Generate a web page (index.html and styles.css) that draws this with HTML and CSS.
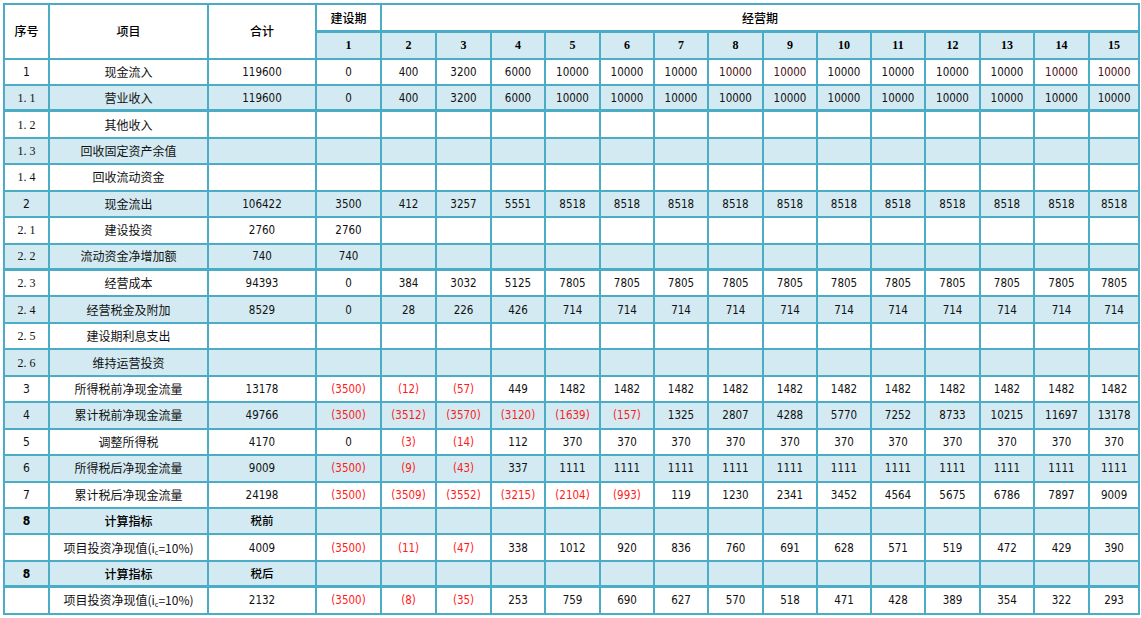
FILE: index.html
```html
<!DOCTYPE html>
<html lang="zh-CN">
<head>
<meta charset="utf-8">
<title>项目投资现金流量表</title>
<link rel="stylesheet" href="styles.css">
</head>
<body>
<table class="cf">
<colgroup>
<col class="c-seq"><col class="c-item"><col class="c-total"><col class="c-y1">
<col class="c-a"><col class="c-a"><col class="c-b"><col class="c-a"><col class="c-b"><col class="c-b"><col class="c-a"><col class="c-b"><col class="c-b"><col class="c-b"><col class="c-a"><col class="c-b"><col class="c-a"><col class="c-last">
</colgroup>
<thead>
<tr class="h1">
<th rowspan="2" class="hb">序号</th><th rowspan="2">项目</th><th rowspan="2">合计</th><th class="thk">建设期</th><th colspan="14" class="thk">经营期</th>
</tr>
<tr class="h2 alt">
<th>1</th><th>2</th><th>3</th><th>4</th><th>5</th><th>6</th><th>7</th><th>8</th><th>9</th><th>10</th><th>11</th><th>12</th><th>13</th><th>14</th><th>15</th>
</tr>
</thead>
<tbody>
<tr><td class="sq">1</td><td>现金流入</td><td>119600</td><td>0</td><td>400</td><td>3200</td><td>6000</td><td>10000</td><td>10000</td><td>10000</td><td class="mr">10000</td><td class="mr">10000</td><td>10000</td><td>10000</td><td>10000</td><td>10000</td><td class="mr">10000</td><td class="mr">10000</td></tr>
<tr class="alt thkb"><td class="sqs">1. 1</td><td>营业收入</td><td>119600</td><td>0</td><td>400</td><td>3200</td><td>6000</td><td>10000</td><td>10000</td><td>10000</td><td>10000</td><td>10000</td><td>10000</td><td>10000</td><td>10000</td><td>10000</td><td>10000</td><td>10000</td></tr>
<tr><td class="sqs">1. 2</td><td>其他收入</td><td></td><td></td><td></td><td></td><td></td><td></td><td></td><td></td><td></td><td></td><td></td><td></td><td></td><td></td><td></td><td></td></tr>
<tr class="alt"><td class="sqs">1. 3</td><td>回收固定资产余值</td><td></td><td></td><td></td><td></td><td></td><td></td><td></td><td></td><td></td><td></td><td></td><td></td><td></td><td></td><td></td><td></td></tr>
<tr><td class="sqs">1. 4</td><td>回收流动资金</td><td></td><td></td><td></td><td></td><td></td><td></td><td></td><td></td><td></td><td></td><td></td><td></td><td></td><td></td><td></td><td></td></tr>
<tr class="alt"><td class="sq">2</td><td>现金流出</td><td>106422</td><td>3500</td><td>412</td><td>3257</td><td>5551</td><td>8518</td><td>8518</td><td>8518</td><td>8518</td><td>8518</td><td>8518</td><td>8518</td><td>8518</td><td>8518</td><td>8518</td><td>8518</td></tr>
<tr><td class="sqs">2. 1</td><td>建设投资</td><td>2760</td><td>2760</td><td></td><td></td><td></td><td></td><td></td><td></td><td></td><td></td><td></td><td></td><td></td><td></td><td></td><td></td></tr>
<tr class="alt thkb"><td class="sqs">2. 2</td><td>流动资金净增加额</td><td>740</td><td>740</td><td></td><td></td><td></td><td></td><td></td><td></td><td></td><td></td><td></td><td></td><td></td><td></td><td></td><td></td></tr>
<tr><td class="sqs">2. 3</td><td>经营成本</td><td>94393</td><td>0</td><td>384</td><td>3032</td><td>5125</td><td>7805</td><td>7805</td><td>7805</td><td>7805</td><td>7805</td><td>7805</td><td>7805</td><td>7805</td><td>7805</td><td>7805</td><td>7805</td></tr>
<tr class="alt"><td class="sqs">2. 4</td><td>经营税金及附加</td><td>8529</td><td>0</td><td>28</td><td>226</td><td>426</td><td>714</td><td>714</td><td>714</td><td>714</td><td>714</td><td>714</td><td>714</td><td>714</td><td>714</td><td>714</td><td>714</td></tr>
<tr><td class="sqs">2. 5</td><td>建设期利息支出</td><td></td><td></td><td></td><td></td><td></td><td></td><td></td><td></td><td></td><td></td><td></td><td></td><td></td><td></td><td></td><td></td></tr>
<tr class="alt"><td class="sqs">2. 6</td><td>维持运营投资</td><td></td><td></td><td></td><td></td><td></td><td></td><td></td><td></td><td></td><td></td><td></td><td></td><td></td><td></td><td></td><td></td></tr>
<tr><td class="sq">3</td><td>所得税前净现金流量</td><td>13178</td><td class="neg">(3500)</td><td class="neg">(12)</td><td class="neg">(57)</td><td>449</td><td>1482</td><td>1482</td><td>1482</td><td>1482</td><td>1482</td><td>1482</td><td>1482</td><td>1482</td><td>1482</td><td>1482</td><td>1482</td></tr>
<tr class="alt"><td class="sq">4</td><td>累计税前净现金流量</td><td>49766</td><td class="neg">(3500)</td><td class="neg">(3512)</td><td class="neg">(3570)</td><td class="neg">(3120)</td><td class="neg">(1639)</td><td class="neg">(157)</td><td>1325</td><td>2807</td><td>4288</td><td>5770</td><td>7252</td><td>8733</td><td>10215</td><td>11697</td><td>13178</td></tr>
<tr><td class="sq">5</td><td>调整所得税</td><td>4170</td><td>0</td><td class="neg">(3)</td><td class="neg">(14)</td><td>112</td><td>370</td><td>370</td><td>370</td><td>370</td><td>370</td><td>370</td><td>370</td><td>370</td><td>370</td><td>370</td><td>370</td></tr>
<tr class="alt"><td class="sq">6</td><td>所得税后净现金流量</td><td>9009</td><td class="neg">(3500)</td><td class="neg">(9)</td><td class="neg">(43)</td><td>337</td><td>1111</td><td>1111</td><td>1111</td><td>1111</td><td>1111</td><td>1111</td><td>1111</td><td>1111</td><td>1111</td><td>1111</td><td>1111</td></tr>
<tr><td class="sq">7</td><td>累计税后净现金流量</td><td>24198</td><td class="neg">(3500)</td><td class="neg">(3509)</td><td class="neg">(3552)</td><td class="neg">(3215)</td><td class="neg">(2104)</td><td class="neg">(993)</td><td>119</td><td>1230</td><td>2341</td><td>3452</td><td>4564</td><td>5675</td><td>6786</td><td>7897</td><td>9009</td></tr>
<tr class="alt bold"><td class="sq">8</td><td>计算指标</td><td>税前</td><td></td><td></td><td></td><td></td><td></td><td></td><td></td><td></td><td></td><td></td><td></td><td></td><td></td><td></td><td></td></tr>
<tr><td></td><td>项目投资净现值(i<sub>c</sub>=10%)</td><td>4009</td><td class="neg">(3500)</td><td class="neg">(11)</td><td class="neg">(47)</td><td>338</td><td>1012</td><td>920</td><td>836</td><td>760</td><td>691</td><td>628</td><td>571</td><td>519</td><td>472</td><td>429</td><td>390</td></tr>
<tr class="alt bold thkb"><td class="sq">8</td><td>计算指标</td><td>税后</td><td></td><td></td><td></td><td></td><td></td><td></td><td></td><td></td><td></td><td></td><td></td><td></td><td></td><td></td><td></td></tr>
<tr><td></td><td>项目投资净现值(i<sub>c</sub>=10%)</td><td>2132</td><td class="neg">(3500)</td><td class="neg">(8)</td><td class="neg">(35)</td><td>253</td><td>759</td><td>690</td><td>627</td><td>570</td><td>518</td><td>471</td><td>428</td><td>389</td><td>354</td><td>322</td><td>293</td></tr>
</tbody>
</table>
</body>
</html>
```
FILE: styles.css
```css
html, body {
  margin: 0;
  padding: 0;
  background: #ffffff;
}
body {
  padding: 3px 0 0 3px;
}
.cf {
  border-collapse: separate;
  border-spacing: 0;
  table-layout: fixed;
  width: 1136px;
  border-left: 2px solid #4bacc6;
  border-top: 2px solid #4bacc6;
  font-family: "DejaVu Sans Condensed", "Liberation Sans", "Noto Sans CJK SC", sans-serif;
  font-size: 11.5px;
  color: #111111;
}
.c-seq { width: 45px; }
.c-item { width: 159px; }
.c-total { width: 108px; }
.c-y1 { width: 65px; }
.c-a { width: 55px; }
.c-b { width: 54px; }
.c-last { width: 50px; }

.cf th, .cf td {
  border-right: 2px solid #4bacc6;
  border-bottom: 2px solid #4bacc6;
  padding: 0;
  text-align: center;
  vertical-align: middle;
  line-height: 14px;
  white-space: nowrap;
  overflow: hidden;
}
.cf td:nth-child(2), .cf th {
  font-family: "Noto Sans CJK SC", sans-serif;
  font-size: 12px;
}
.cf th {
  font-weight: 500;
  color: #000000;
}
.h1 { height: 28px; }
.h1 th.thk { border-bottom-width: 3px; }
.h2 { height: 26.5px; }
.h2 th {
  font-family: "Liberation Serif", "Noto Sans CJK SC", serif;
  font-size: 12px;
  font-weight: 700;
}
tbody tr { height: 26.45px; }
.alt th, .alt td { background: #d3eaf2; }
.h1 th { background: #ffffff; }
.thkb td { border-bottom-width: 3px; }
.sqs {
  font-family: "Liberation Serif", serif;
  font-size: 12px;
}
.sq { font-size: 12px; }
.bold td { font-weight: 500; color: #000000; }
.bold td.sq { font-weight: 700; }
.neg { color: #ff1a1a; }
.mr { color: #4a0d12; }
sub {
  font-size: 7px;
  vertical-align: -2px;
  line-height: 0;
}
```
